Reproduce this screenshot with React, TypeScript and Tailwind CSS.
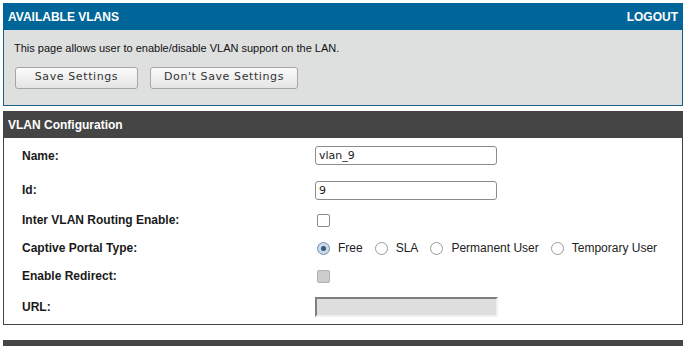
import { ReactNode } from 'react';

const radios = ['Free', 'SLA', 'Permanent User', 'Temporary User'];

function Row({ label, h, children }: { label: string; h: string; children: ReactNode }) {
  return (
    <div className={`flex items-center pl-[18px] ${h}`}>
      <div className="w-[293px] shrink-0 text-[12px] font-bold text-[#1a1a1a]">{label}</div>
      <div className="flex items-center">{children}</div>
    </div>
  );
}

function Radio({ checked }: { checked?: boolean }) {
  return (
    <span
      className={`flex h-[13px] w-[13px] items-center justify-center rounded-full border ${
        checked ? 'border-[#7d8fa6] bg-[#c9d9ec]' : 'border-[#9a9a9a] bg-white'
      }`}
    >
      {checked && <span className="h-[5px] w-[5px] rounded-full bg-[#3c5878]" />}
    </span>
  );
}

export default function App() {
  return (
    <div className="h-[346px] w-[686px] overflow-hidden bg-white pt-[3px] font-['Liberation_Sans',Arial,sans-serif]">
      <div className="mx-[3px]">
        <div className="flex h-[27px] items-center justify-between bg-[#006699] px-[5px] text-[12px] font-bold text-white">
          <span>AVAILABLE VLANS</span>
          <span>LOGOUT</span>
        </div>
        <div className="h-[76px] border border-t-0 border-[#1b5f88] bg-[#dedfdf] pl-[10px] pt-[10px]">
          <p className="text-[11px] text-[#111]">This page allows user to enable/disable VLAN support on the LAN.</p>
          <div className="mt-[10px] flex gap-[12px] pl-[1px]">
            <button className="h-[22px] w-[123px] rounded-[3px] border border-[#a6a6a6] bg-gradient-to-b from-[#fbfbfb] to-[#e4e4e4] font-['DejaVu_Sans',sans-serif] text-[11px] tracking-[0.6px] text-[#333]">
              Save Settings
            </button>
            <button className="h-[22px] w-[148px] rounded-[3px] border border-[#a6a6a6] bg-gradient-to-b from-[#fbfbfb] to-[#e4e4e4] font-['DejaVu_Sans',sans-serif] text-[11px] tracking-[0.6px] text-[#333]">
              Don't Save Settings
            </button>
          </div>
        </div>

        <div className="mt-[5px] flex h-[27px] items-center bg-[#454545] px-[5px] text-[12px] font-bold text-white">
          VLAN Configuration
        </div>
        <div className="border border-t-0 border-[#444]">
          <Row label="Name:" h="h-[35px]">
            <input
              defaultValue="vlan_9"
              className="h-[19px] w-[182px] rounded-[3px] border border-[#8c8c8c] bg-white px-[3px] font-['DejaVu_Sans',sans-serif] text-[11px] text-[#222] outline-none"
            />
          </Row>
          <Row label="Id:" h="h-[34px]">
            <input
              defaultValue="9"
              className="h-[19px] w-[182px] rounded-[3px] border border-[#8c8c8c] bg-white px-[3px] font-['DejaVu_Sans',sans-serif] text-[11px] text-[#222] outline-none"
            />
          </Row>
          <Row label="Inter VLAN Routing Enable:" h="h-[26px]">
            <span className="ml-[2px] h-[13px] w-[13px] rounded-[2px] border border-[#8a8a8a] bg-white" />
          </Row>
          <Row label="Captive Portal Type:" h="h-[30px]">
            <div className="ml-[2px] flex items-center text-[12px] text-[#222]">
              {radios.map((r, i) => (
                <span key={r} className="mr-[12px] flex items-center gap-[8px]">
                  <Radio checked={i === 0} />
                  {r}
                </span>
              ))}
            </div>
          </Row>
          <Row label="Enable Redirect:" h="h-[26px]">
            <span className="ml-[2px] h-[13px] w-[13px] rounded-[2px] border border-[#b0b0b0] bg-[#cdcdcd]" />
          </Row>
          <Row label="URL:" h="h-[35px]">
            <div className="h-[20px] w-[183px] border-2 border-b-[#f0f0f0] border-l-[#7f7f7f] border-r-[#f0f0f0] border-t-[#7f7f7f] bg-[#dedede]" />
          </Row>
        </div>

        <div className="mt-[15px] h-[10px] bg-[#454545]" />
      </div>
    </div>
  );
}
